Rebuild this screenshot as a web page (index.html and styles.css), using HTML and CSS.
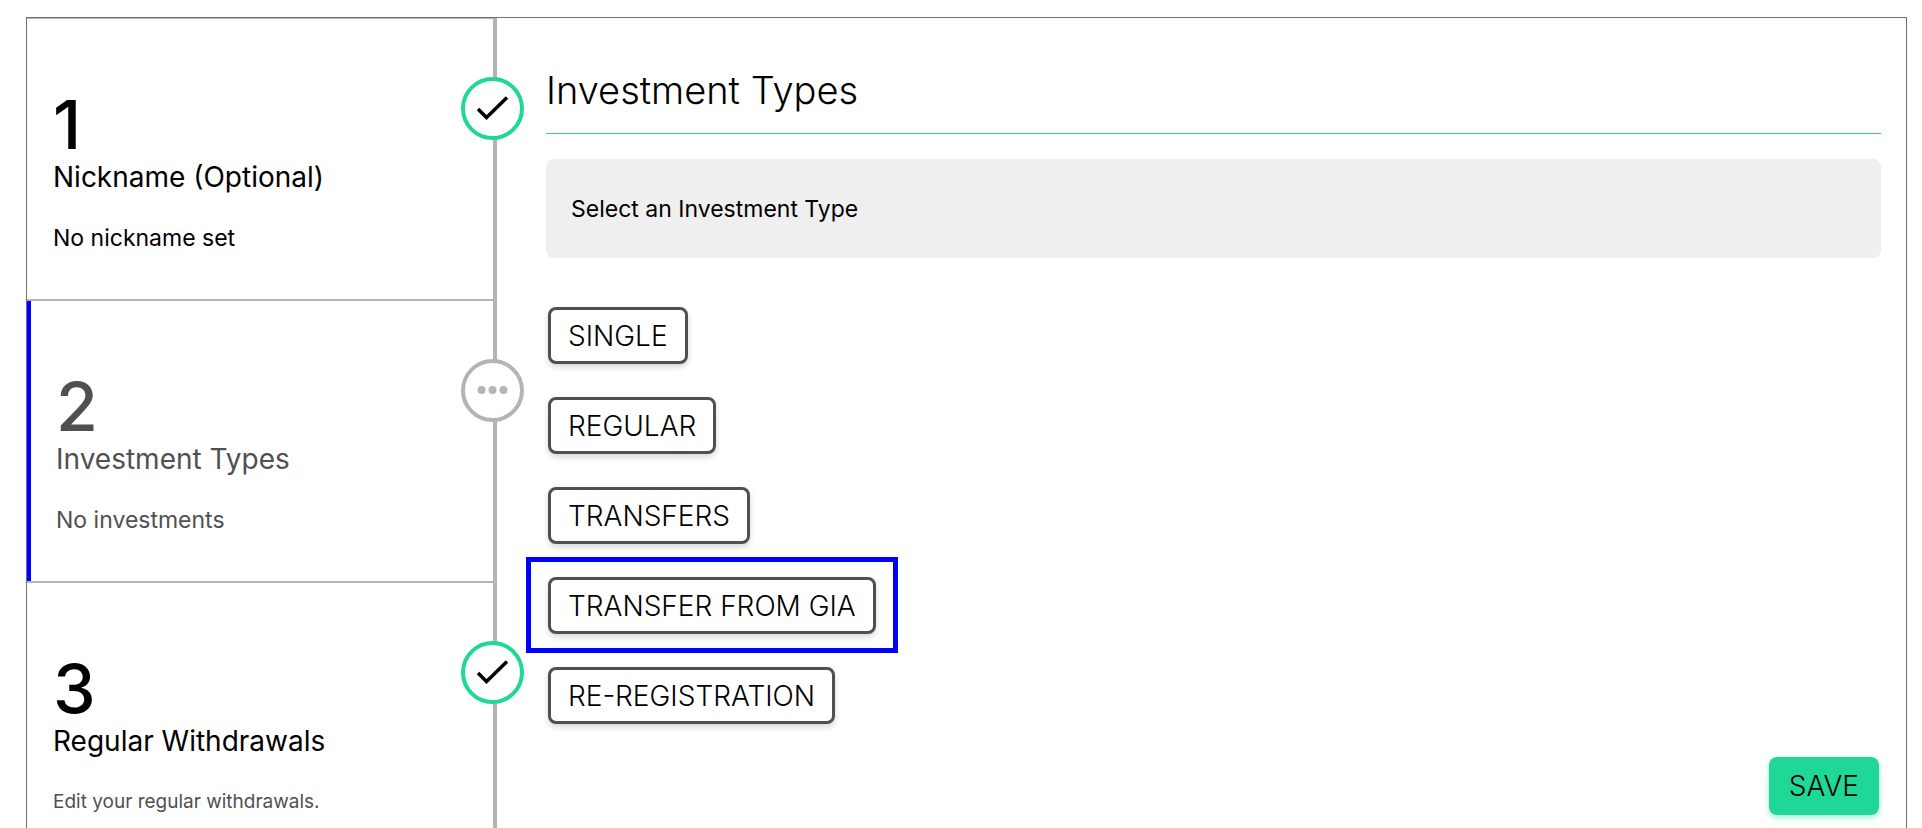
FILE: index.html
```html
<!DOCTYPE html>
<html lang="en">
<head>
<meta charset="utf-8">
<meta name="viewport" content="width=device-width, initial-scale=1">
<title>Investment Types</title>
<link rel="stylesheet" href="styles.css">
</head>
<body>
<main class="frame">
  <ol class="steps">
    <li class="step">
      <span class="step-number">1</span>
      <h2 class="step-title">Nickname (Optional)</h2>
      <p class="step-text">No nickname set</p>
      <span class="status status-done">
        <svg class="status-icon" viewBox="0 0 55 55" aria-hidden="true"><path d="M13 28L21.500 36.500L42 16.500" fill="none" stroke="#000" stroke-width="3.500"/></svg>
      </span>
    </li>
    <li class="step step-current">
      <span class="step-number">2</span>
      <h2 class="step-title">Investment Types</h2>
      <p class="step-text">No investments</p>
      <span class="status">
        <svg class="status-icon" viewBox="0 0 55 55" aria-hidden="true"><g fill="#b4b4b4"><circle cx="16.500" cy="27" r="4"/><circle cx="27.500" cy="27" r="4"/><circle cx="38.500" cy="27" r="4"/></g></svg>
      </span>
    </li>
    <li class="step">
      <span class="step-number">3</span>
      <h2 class="step-title">Regular Withdrawals</h2>
      <p class="step-text step-hint">Edit your regular withdrawals.</p>
      <span class="status status-done">
        <svg class="status-icon" viewBox="0 0 55 55" aria-hidden="true"><path d="M13 28L21.500 36.500L42 16.500" fill="none" stroke="#000" stroke-width="3.500"/></svg>
      </span>
    </li>
  </ol>
  <section class="content">
    <h1 class="title">Investment Types</h1>
    <p class="notice">Select an Investment Type</p>
    <div class="choices">
      <button class="button" type="button">SINGLE</button>
      <button class="button" type="button">REGULAR</button>
      <button class="button" type="button">TRANSFERS</button>
      <div class="highlighted"><button class="button" type="button">TRANSFER FROM GIA</button></div>
      <button class="button" type="button">RE-REGISTRATION</button>
    </div>
    <button class="button button-save" type="button">SAVE</button>
  </section>
</main>
</body>
</html>
```
FILE: styles.css
```css
* {
  box-sizing: border-box;
}

body {
  margin: 0;
  height: 100vh;
  overflow: hidden;
  background: #fff;
  color: #000;
  font-family: Inter, "Liberation Sans", sans-serif;
}

h1,
h2,
p {
  margin: 0;
  font-weight: 400;
}

.frame {
  display: flex;
  margin: 17px 15px 0 26px;
  border: 1px solid #707070;
}

.steps {
  flex: 0 0 470px;
  margin: 0;
  padding: 0;
  list-style: none;
  border-right: 4px solid #b4b4b4;
}

.step {
  position: relative;
  min-height: 282px;
  padding: 69px 26px 32px;
  border-top: 2px solid #b4b4b4;
}

.step:first-child {
  min-height: 281px;
  border-top-width: 1px;
}

.step-current {
  color: #505050;
  box-shadow: inset 4px 0 #00f;
  padding-left: 29px;
}

.step-number {
  display: block;
  font-size: 68px;
  line-height: 72px;
  font-weight: 500;
}

.step-title {
  margin-top: 1px;
  font-size: 28px;
  line-height: 32px;
}

.step-text {
  margin-top: 29px;
  font-size: 23px;
  line-height: 32px;
}

.step-hint {
  color: #505050;
  font-size: 19px;
}

.status {
  position: absolute;
  top: 58px;
  right: -31px;
  width: 63px;
  height: 63px;
  border: 4px solid #b4b4b4;
  border-radius: 50%;
  background: #fff;
}

.status-done {
  border-color: #1fd898;
}

.status-icon {
  display: block;
}

.content {
  flex: 1;
  min-width: 0;
  display: flex;
  flex-direction: column;
  padding: 48px 25px 48px 49px;
}

.title {
  padding-bottom: 19px;
  border-bottom: 1px solid #3c9;
  font-size: 38px;
  line-height: 48px;
  font-weight: 300;
}

.notice {
  margin-top: 25px;
  padding: 34px 25px 33px;
  border-radius: 8px;
  background: #efefef;
  font-size: 23px;
  line-height: 32px;
}

.choices {
  display: flex;
  flex-direction: column;
  align-items: flex-start;
  gap: 33px;
  margin: 49px 2px 33px;
}

.button {
  height: 57px;
  padding: 0 17px;
  border: 3px solid #505050;
  border-radius: 8px;
  background: #fff;
  box-shadow: 0 3px 6px rgba(0, 0, 0, 0.16);
  color: #000;
  font-family: inherit;
  font-size: 28px;
  font-weight: 300;
}

.highlighted {
  margin: -20px -22px -19px;
  padding: 15px 17px 14px;
  border: 5px solid #00f;
}

.button-save {
  align-self: flex-end;
  height: 58px;
  margin-right: 2px;
  border-color: #1fd898;
  background: #1fd898;
  box-shadow: 0 3px 6px rgba(31, 216, 152, 0.4);
}
```
